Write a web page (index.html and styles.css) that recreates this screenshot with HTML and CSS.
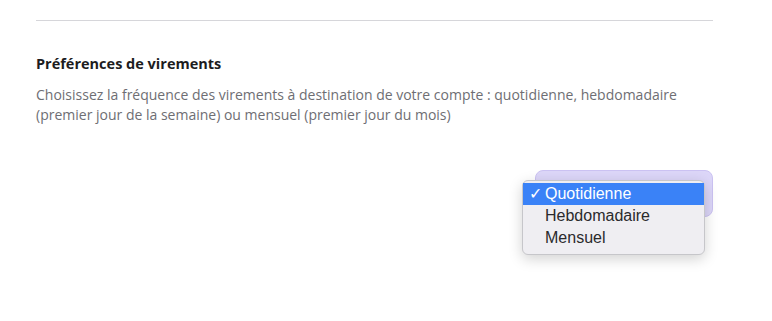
FILE: index.html
```html
<!DOCTYPE html>
<html lang="fr">
<head>
<meta charset="utf-8">
<link rel="stylesheet" href="styles.css">
</head>
<body>
<div class="page">
  <div class="divider"></div>
  <section class="pref">
    <h2 class="pref-title">Préférences de virements</h2>
    <p class="pref-desc">Choisissez la fréquence des virements à destination de votre compte : quotidienne, hebdomadaire (premier jour de la semaine) ou mensuel (premier jour du mois)</p>
    <div class="pref-actions">
      <div class="select-wrap">
        <div class="select-btn"></div>
        <ul class="menu">
          <li class="menu-item is-active"><span class="check">✓</span>Quotidienne</li>
          <li class="menu-item"><span class="check"></span>Hebdomadaire</li>
          <li class="menu-item"><span class="check"></span>Mensuel</li>
        </ul>
      </div>
    </div>
  </section>
</div>
</body>
</html>
```
FILE: styles.css
```css
* { box-sizing: border-box; }
html, body { margin: 0; padding: 0; background: #fff; }
body { font-family: "Open Sans", "Noto Sans", sans-serif; }
.page { width: 772px; height: 321px; padding: 20px 59px 0 36px; }
.divider { border-top: 1px solid #d6d6da; }
.pref-title { margin: 33px 0 0; font-size: 14.5px; line-height: 20px; font-weight: 700; color: #1c1c1e; }
.pref-desc { margin: 11px 0 0; font-size: 14px; line-height: 20px; color: #6e6e73; max-width: 677px; }
.pref-actions { display: flex; justify-content: flex-end; margin-top: 45px; }
.select-wrap { position: relative; width: 178px; height: 47px; }
.select-btn { width: 100%; height: 100%; border-radius: 8px; background: #dcd6f8; border: 1px solid #cbc2f2; }
.menu { position: absolute; left: -13px; top: 10px; width: 183px; margin: 0; padding: 2px 0 5px; list-style: none;
  background: #efeef2; border: 1px solid #c6c6ca; border-radius: 6px; box-shadow: 0 4px 14px rgba(0,0,0,0.18);
  font-family: "Liberation Sans", Arial, sans-serif; font-size: 16px; color: #2a2a2c; }
.menu-item { display: flex; align-items: center; height: 22px; padding-left: 6px; }
.menu-item.is-active { background: #3a82f7; color: #fff; }
.check { width: 16px; font-size: 16px; line-height: 1; }
```
